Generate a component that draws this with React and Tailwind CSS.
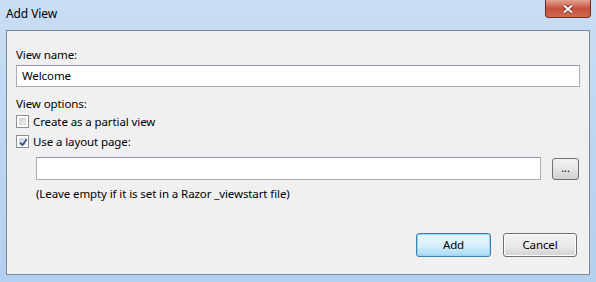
import React from "react";

function CheckBox({ checked }) {
  return (
    <div className="w-[13px] h-[13px] border border-[#8e8f8f] bg-white p-[2px] shrink-0">
      <div className="w-full h-full bg-gradient-to-br from-[#cbcfd5] to-[#f6f6f6] border border-[#d0d3d8] relative">
        {checked && (
          <svg viewBox="0 0 9 9" className="absolute -left-[1px] -top-[1px] w-[9px] h-[9px]">
            <path d="M1.2 4.6 L3.4 7 L7.8 1.2" fill="none" stroke="#3e4e8c" strokeWidth="1.8" />
          </svg>
        )}
      </div>
    </div>
  );
}

export default function App() {
  return (
    <div
      className="w-[596px] h-[282px] flex flex-col bg-gradient-to-b from-[#c9def5] via-[#bcd6f2] to-[#b4d0f0] text-[11.5px] tracking-[-0.1px] text-black"
      style={{ fontFamily: '"Noto Sans", "Open Sans", sans-serif' }}
    >
      <div className="h-[30px] flex items-start justify-between pl-[6px] pr-[5px] shrink-0">
        <div className="pt-[6px] text-[12px] text-black leading-[15px]">Add View</div>
        <div className="w-[46px] h-[18px] rounded-b-[4px] border border-t-0 border-[#6b2e25] bg-gradient-to-b from-[#e4a292] via-[#c5523c] to-[#d06a4e] flex items-center justify-center">
          <svg viewBox="0 0 12 10" className="w-[12px] h-[10px]">
            <path d="M2 1.5 L10 8.5 M10 1.5 L2 8.5" stroke="#5a2a22" strokeWidth="3.4" />
            <path d="M2 1.5 L10 8.5 M10 1.5 L2 8.5" stroke="#ffffff" strokeWidth="2" />
          </svg>
        </div>
      </div>
      <div className="flex-1 mx-[6px] mb-[7px] border border-[#7d8897] bg-[#f0f0f0] flex flex-col pl-[9px] pr-[9px] pt-[16px]">
        <div className="leading-[15px]">View name:</div>
        <div className="mt-[3px] h-[22px] border border-[#abadb3] border-t-[#8c98a8] bg-white flex items-center pl-[5px]">
          Welcome
        </div>
        <div className="mt-[9px] leading-[15px]">View options:</div>
        <div className="mt-[3px] flex items-center gap-[4px] h-[15px]">
          <CheckBox />
          <span>Create as a partial view</span>
        </div>
        <div className="mt-[5px] flex items-center gap-[4px] h-[15px]">
          <CheckBox checked />
          <span>Use a layout page:</span>
        </div>
        <div className="mt-[8px] pl-[20px] flex items-center gap-[11px]">
          <div className="flex-1 h-[23px] border border-[#abadb3] border-t-[#8c98a8] bg-white" />
          <div className="w-[27px] h-[22px] rounded-[3px] border border-[#707070] bg-gradient-to-b from-[#f2f2f2] via-[#e6e6e6] to-[#d0d0d0] flex items-center justify-center leading-none text-[11px] pb-[2px] mr-[1px]">
            ...
          </div>
        </div>
        <div className="mt-[6px] pl-[20px] leading-[15px]">(Leave empty if it is set in a Razor _viewstart file)</div>
        <div className="flex-1" />
        <div className="flex justify-end gap-[12px] pr-[3px] mb-[17px]">
          <div className="w-[75px] h-[24px] rounded-[3px] border border-[#3c7fb1] bg-gradient-to-b from-[#eaf6fd] via-[#d9f0fc] to-[#a7d9f5] flex items-center justify-center shadow-[inset_0_0_0_1px_#9ad4f2]">
            Add
          </div>
          <div className="w-[74px] h-[24px] rounded-[3px] border border-[#707070] bg-gradient-to-b from-[#f2f2f2] via-[#ebebeb] to-[#d2d2d2] flex items-center justify-center shadow-[inset_0_0_0_1px_#fcfcfc]">
            Cancel
          </div>
        </div>
      </div>
    </div>
  );
}
